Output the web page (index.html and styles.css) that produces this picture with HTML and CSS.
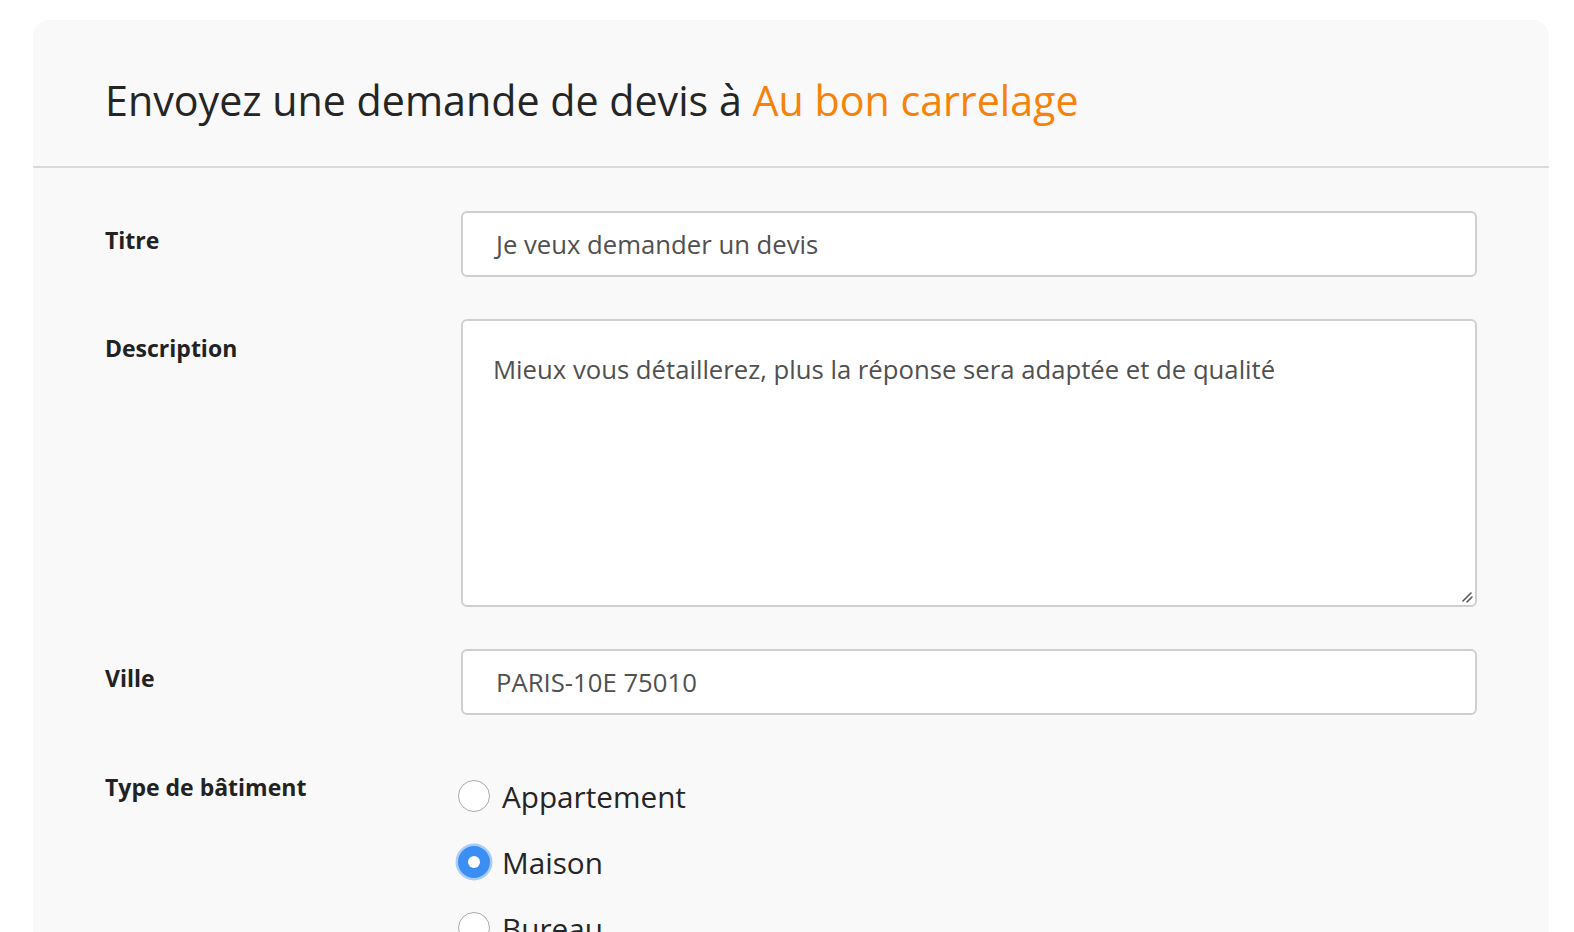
FILE: index.html
```html
<!DOCTYPE html>
<html lang="fr">
<head>
<meta charset="utf-8">
<title>Demande de devis</title>
<link rel="stylesheet" href="styles.css">
</head>
<body>
<div class="card">
  <div class="card-header">
    <h1 class="title">Envoyez une demande de devis à <span class="accent">Au bon carrelage</span></h1>
  </div>
  <form class="card-body">
    <div class="row">
      <label class="label">Titre</label>
      <div class="field"><div class="input">Je veux demander un devis</div></div>
    </div>
    <div class="row">
      <label class="label">Description</label>
      <div class="field">
        <div class="textarea">Mieux vous détaillerez, plus la réponse sera adaptée et de qualité
          <svg class="grip" width="14" height="14" viewBox="0 0 14 14"><path d="M12 4 L4 12 M13 8 L8 13" stroke="#555" stroke-width="1.6" stroke-linecap="round"/></svg>
        </div>
      </div>
    </div>
    <div class="row">
      <label class="label">Ville</label>
      <div class="field"><div class="input">PARIS-10E 75010</div></div>
    </div>
    <div class="row">
      <label class="label label-radio">Type de bâtiment</label>
      <div class="field radios">
        <div class="radio-item"><span class="radio"></span><span class="radio-text">Appartement</span></div>
        <div class="radio-item"><span class="radio checked"></span><span class="radio-text">Maison</span></div>
        <div class="radio-item"><span class="radio"></span><span class="radio-text">Bureau</span></div>
      </div>
    </div>
  </form>
</div>
</body>
</html>
```
FILE: styles.css
```css
html, body {
  margin: 0;
  padding: 0;
  background: #ffffff;
}
body {
  font-family: "Open Sans", "Noto Sans", sans-serif;
  color: #222;
  padding: 20px 25px 0 33px;
  height: 932px;
  overflow: hidden;
  box-sizing: border-box;
}
.card {
  background: #f9f9f9;
  border-radius: 16px 16px 0 0;
  width: 1516px;
  min-height: 1000px;
}
.card-header {
  height: 148px;
  border-bottom: 2px solid #d6dcda;
  display: flex;
  align-items: center;
  padding-left: 72px;
  box-sizing: border-box;
}
.title {
  margin: 0;
  font-weight: 400;
  font-size: 41.2px;
  color: #252525;
  padding-top: 13px;
}
.accent { color: #f7820a; }
.card-body {
  padding: 43px 0 0 72px;
  display: flex;
  flex-direction: column;
}
.row {
  display: flex;
  margin-bottom: 42px;
}
.label {
  width: 356px;
  flex: none;
  font-weight: 700;
  font-size: 23px;
  color: #222;
  padding-top: 13px;
}
.label-radio {
  padding-top: 14px;
}
.field {
  width: 1016px;
}
.input {
  height: 66px;
  border: 2px solid #cfcfcf;
  border-radius: 6px;
  background: #fff;
  font-size: 25.7px;
  color: #505050;
  padding-left: 33px;
  display: flex;
  align-items: center;
  box-sizing: border-box;
}
.textarea {
  position: relative;
  height: 288px;
  border: 2px solid #cfcfcf;
  border-radius: 6px;
  background: #fff;
  font-size: 25.7px;
  color: #505050;
  padding: 31px 0 0 30px;
  box-sizing: border-box;
}
.grip {
  position: absolute;
  right: 2px;
  bottom: 2px;
}
.radios {
  display: flex;
  flex-direction: column;
  gap: 30px;
  padding-top: 21px;
}
.radio-item {
  display: flex;
  align-items: center;
  gap: 12px;
  height: 36px;
  margin-left: -3px;
}
.radio {
  width: 32px;
  height: 32px;
  border: 1.5px solid #aaa;
  border-radius: 50%;
  background: #fff;
  box-sizing: border-box;
  flex: none;
}
.radio.checked {
  background: #3b8ef3;
  border: 10.5px solid #3b8ef3;
  box-shadow: 0 0 0 2.5px #a9cdf8;
  position: relative;
}
.radio.checked::after {
  content: "";
  position: absolute;
  inset: 0;
  background: #fff;
  border-radius: 50%;
}
.radio-text {
  font-size: 29.7px;
  color: #252525;
}
```
